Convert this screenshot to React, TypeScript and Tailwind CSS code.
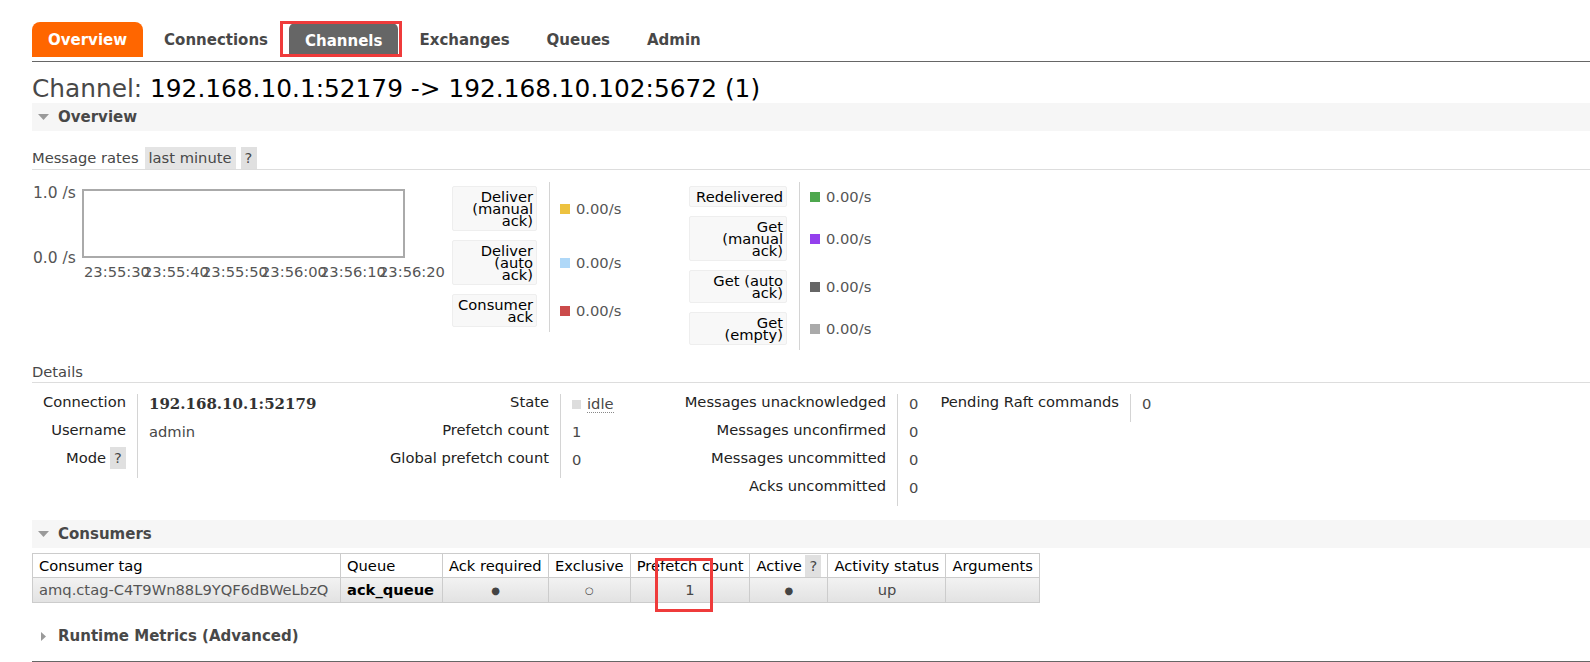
const tabs = ["Overview", "Connections", "Channels", "Exchanges", "Queues", "Admin"];

const axisTimes = ["23:55:30", "23:55:40", "23:55:50", "23:56:00", "23:56:10", "23:56:20"];

const leftRates = [
  { lines: ["Deliver", "(manual", "ack)"], color: "bg-[#edc240]" },
  { lines: ["Deliver", "(auto", "ack)"], color: "bg-[#afd8f8]" },
  { lines: ["Consumer", "ack"], color: "bg-[#cb4b4b]" },
];

const rightRates = [
  { lines: ["Redelivered"], color: "bg-[#4da74d]" },
  { lines: ["Get", "(manual", "ack)"], color: "bg-[#9440ed]" },
  { lines: ["Get (auto", "ack)"], color: "bg-[#666666]" },
  { lines: ["Get", "(empty)"], color: "bg-[#aaaaaa]" },
];

const columns = [
  { name: "Consumer tag", w: "w-[308px]" },
  { name: "Queue", w: "w-[102px]" },
  { name: "Ack required", w: "w-[106px]" },
  { name: "Exclusive", w: "w-[79px]" },
  { name: "Prefetch count", w: "w-[119px]" },
  { name: "Active", w: "w-[78px]", help: true },
  { name: "Activity status", w: "w-[118px]" },
  { name: "Arguments", w: "w-[88px]" },
];

function Help({ className = "" }: { className?: string }) {
  return (
    <span
      className={`inline-flex h-[22px] w-[16px] items-center justify-center bg-[#e0e0e0] text-[#484848] ${className}`}
    >
      ?
    </span>
  );
}

function SectionBar({ title }: { title: string }) {
  return (
    <div className="flex h-[28px] items-center bg-[#f6f6f6]">
      <svg className="ml-[6px]" width="11" height="6" viewBox="0 0 11 6">
        <polygon points="0,0 11,0 5.5,6" fill="#9a9a9a" />
      </svg>
      <span className="ml-[9px] text-[15px] font-bold text-[#484848]">{title}</span>
    </div>
  );
}

function RateGroup({ rates, boxW, valueW }: { rates: typeof leftRates; boxW: string; valueW: string }) {
  return (
    <div className="flex flex-col">
      {rates.map((r) => (
        <div key={r.lines.join(" ")} className="flex">
          <div className="pt-[4px] pb-[5px] pr-[12px]">
            <div
              className={`${boxW} rounded-[2px] border border-[#eeeeee] bg-[#f8f8f8] pt-[4px] pb-[3px] pr-[3px] text-right leading-[12px] whitespace-nowrap text-black`}
            >
              {r.lines.map((l) => (
                <div key={l}>{l}</div>
              ))}
            </div>
          </div>
          <div className={`${valueW} flex items-center gap-[6px] border-l border-[#d4d4d4] pl-[10px]`}>
            <span className={`h-[10px] w-[10px] ${r.color}`} />
            <span className="text-[#555]">0.00/s</span>
          </div>
        </div>
      ))}
    </div>
  );
}

function Chart() {
  return (
    <div className="relative h-[100px] w-[420px] text-[#555]">
      <span className="absolute top-[2px] left-[1px] text-[15.5px] leading-[18px]">1.0 /s</span>
      <span className="absolute top-[67px] left-[1px] text-[15.5px] leading-[18px]">0.0 /s</span>
      <div className="absolute top-[7px] left-[50px] h-[69px] w-[323px] border-2 border-[#aaaaaa] bg-white" />
      {axisTimes.map((t, i) => (
        <span key={t} className="absolute top-[81px] leading-[18px]" style={{ left: 52 + i * 59 }}>
          {t}
        </span>
      ))}
    </div>
  );
}

type Row = { label: React.ReactNode; value: React.ReactNode };

function DetailGroup({ rows, labelW, valueW }: { rows: Row[]; labelW: string; valueW: string }) {
  return (
    <div className="flex">
      <div className={`${labelW} flex flex-col`}>
        {rows.map((r, i) => (
          <div key={i} className="h-[28px] pr-[11px] text-right leading-[16px] text-[#222]">
            {r.label}
          </div>
        ))}
      </div>
      <div className={`${valueW} flex flex-col border-l border-[#d4d4d4]`}>
        {rows.map((r, i) => (
          <div key={i} className="h-[28px] pt-[2px] pl-[11px] leading-[16px] whitespace-nowrap text-[#484848]">
            {r.value}
          </div>
        ))}
      </div>
    </div>
  );
}

export default function App() {
  return (
    <div className="min-h-screen bg-white pt-[22px] pl-[32px] font-['DejaVu_Sans',sans-serif] text-[14.7px] text-[#484848]">
      {/* tabs */}
      <nav className="flex items-end gap-[5px] border-b border-[#666] pb-[4px]">
        {tabs.map((t) => (
          <div
            key={t}
            className={
              t === "Overview"
                ? "flex h-[35px] items-center rounded-t-[8px] bg-[#ff6600] px-[16px] pt-[2px] text-[15px] font-bold text-white"
                : t === "Channels"
                  ? "relative flex h-[34px] items-center rounded-t-[6px] bg-[#666666] px-[16px] pt-[2px] text-[15px] font-bold text-white"
                  : "flex h-[35px] items-center px-[16px] pt-[2px] text-[15px] font-bold text-[#484848]"
            }
          >
            {t}
            {t === "Channels" && (
              <span className="absolute -top-[2px] -right-[4px] bottom-0 -left-[9px] border-[3px] border-[#ef3b3b]" />
            )}
          </div>
        ))}
      </nav>

      <h1 className="mt-[12px] text-[24.8px] leading-[29px] font-normal text-black">
        <span className="text-[#484848]">Channel:</span> 192.168.10.1:52179 -&gt; 192.168.10.102:5672 (1)
      </h1>

      {/* overview */}
      <SectionBar title="Overview" />

      <div className="mt-[16px] flex items-center border-b border-[#dddddd]">
        <span>Message rates</span>
        <span className="ml-[6px] flex h-[22px] items-center bg-[#e4e4e4] px-[4px]">last minute</span>
        <span className="ml-[5px]">
          <Help />
        </span>
      </div>

      <div className="mt-[12px] flex">
        <Chart />
        <RateGroup rates={leftRates} boxW="w-[85px]" valueW="w-[140px]" />
        <RateGroup rates={rightRates} boxW="w-[98px]" valueW="w-[140px]" />
      </div>

      <div className="mt-[11px] flex h-[22px] items-center border-b border-[#dddddd]">Details</div>

      <div className="mt-[11px] flex items-start">
        <DetailGroup
          labelW="w-[105px]"
          valueW="w-[200px]"
          rows={[
            {
              label: "Connection",
              value: (
                <span className="font-['DejaVu_Serif',serif] text-[15px] font-bold text-[#333]">192.168.10.1:52179</span>
              ),
            },
            { label: "Username", value: "admin" },
            {
              label: (
                <span className="inline-flex items-center gap-[4px]">
                  Mode <Help className="-my-[3px]" />
                </span>
              ),
              value: "",
            },
          ]}
        />
        <DetailGroup
          labelW="w-[223px]"
          valueW="w-[100px]"
          rows={[
            {
              label: "State",
              value: (
                <span className="inline-flex items-center gap-[6px]">
                  <span className="h-[9px] w-[9px] bg-[#dddddd]" />
                  <span className="border-b border-dotted border-[#888]">idle</span>
                </span>
              ),
            },
            { label: "Prefetch count", value: "1" },
            { label: "Global prefetch count", value: "0" },
          ]}
        />
        <DetailGroup
          labelW="w-[237px]"
          valueW="w-[28px]"
          rows={[
            { label: "Messages unacknowledged", value: "0" },
            { label: "Messages unconfirmed", value: "0" },
            { label: "Messages uncommitted", value: "0" },
            { label: "Acks uncommitted", value: "0" },
          ]}
        />
        <DetailGroup labelW="w-[205px]" valueW="w-[40px]" rows={[{ label: "Pending Raft commands", value: "0" }]} />
      </div>

      {/* consumers */}
      <div className="mt-[14px]">
        <SectionBar title="Consumers" />
      </div>

      <div className="relative mt-[5px] w-fit">
        <table className="border-collapse">
          <thead>
            <tr className="h-[24px]">
              {columns.map((c) => (
                <th
                  key={c.name}
                  className={`${c.w} border border-[#cccccc] bg-white px-[6px] text-left font-normal whitespace-nowrap text-black`}
                >
                  {c.help ? (
                    <span className="flex items-center justify-between">
                      {c.name}
                      <Help />
                    </span>
                  ) : (
                    c.name
                  )}
                </th>
              ))}
            </tr>
          </thead>
          <tbody>
            <tr className="h-[25px] bg-gradient-to-b from-[#f2f2f2] to-[#e2e2e2]">
              <td className="border border-[#cccccc] px-[6px] whitespace-nowrap text-[#555]">amq.ctag-C4T9Wn88L9YQF6dBWeLbzQ</td>
              <td className="border border-[#cccccc] px-[6px] font-bold text-black">ack_queue</td>
              <td className="border border-[#cccccc] text-center text-[10px] text-[#444]">●</td>
              <td className="border border-[#cccccc] text-center text-[10px] text-[#444]">○</td>
              <td className="border border-[#cccccc] text-center">1</td>
              <td className="border border-[#cccccc] text-center text-[10px] text-[#444]">●</td>
              <td className="border border-[#cccccc] text-center">up</td>
              <td className="border border-[#cccccc]" />
            </tr>
          </tbody>
        </table>
        <span className="absolute top-[5px] left-[623px] h-[54px] w-[58px] border-[3px] border-[#ef3b3b]" />
      </div>

      <div className="mt-[19px] flex h-[28px] items-center">
        <svg className="ml-[9px]" width="5" height="9" viewBox="0 0 5 9">
          <polygon points="0,0 5,4.5 0,9" fill="#9a9a9a" />
        </svg>
        <span className="ml-[12px] text-[15px] font-bold text-[#484848]">Runtime Metrics (Advanced)</span>
      </div>

      <div className="mt-[11px] border-t border-[#666]" />
    </div>
  );
}
